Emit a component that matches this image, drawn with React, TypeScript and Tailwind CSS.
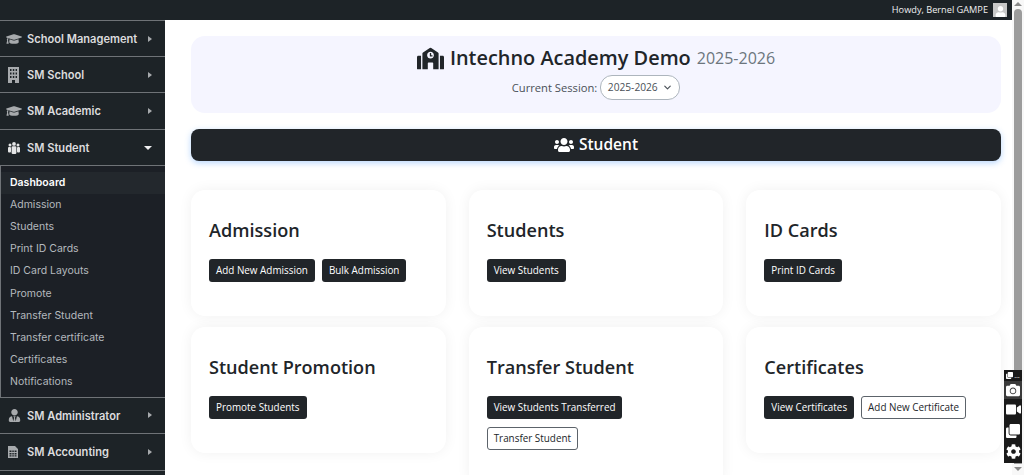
import React from 'react';
import { FaGraduationCap, FaSchool, FaUsers, FaUserTie, FaCamera, FaVideo, FaCog, FaUser, FaClone } from 'react-icons/fa';
import { ChevronDown } from 'lucide-react';

const subItems = [
  'Admission',
  'Students',
  'Print ID Cards',
  'ID Card Layouts',
  'Promote',
  'Transfer Student',
  'Transfer certificate',
  'Certificates',
  'Notifications',
];

// tall building with window grid
const BuildingIcon = () => (
  <svg width="11" height="16" viewBox="0 0 11 16" className="ml-[2px]">
    <path
      fill="currentColor"
      fillRule="evenodd"
      d="M0 0h11v16H7v-3H4v3H0zM2 2v2h1.5V2zm2.8 0v2h1.5V2zm2.8 0v2H9V2zM2 5.5v2h1.5v-2zm2.8 0v2h1.5v-2zm2.8 0v2H9v-2zM2 9v2h1.5V9zm2.8 0v2h1.5V9zm2.8 0v2H9V9z"
    />
  </svg>
);

// sheet with table grid
const SheetIcon = () => (
  <svg width="10" height="12" viewBox="0 0 10 12" className="ml-[2px]">
    <path
      fill="currentColor"
      fillRule="evenodd"
      d="M0 0h7l3 3v9H0zM1.5 4.500v1.500h2V4.500zm2.800 0v1.500h1.500V4.500zm2.300 0v1.500h1.900V4.500zM1.500 7v1.500h2V7zm2.800 0v1.500h1.500V7zm2.300 0v1.500h1.900V7zM1.500 9.300v1.300h2V9.300zm2.800 0v1.300h1.500V9.300zm2.300 0v1.300h1.900V9.300z"
    />
  </svg>
);

// three standing figures
const GroupIcon = () => (
  <svg width="12" height="12" viewBox="0 0 12 12" className="ml-[2px]">
    <g fill="currentColor">
      <circle cx="2" cy="3" r="1.5" />
      <circle cx="6" cy="1.900" r="1.900" />
      <circle cx="10" cy="3" r="1.5" />
      <rect x="0" y="5" width="3" height="5.500" rx="1" />
      <rect x="3.600" y="4.300" width="4.800" height="7.700" rx="1.200" />
      <rect x="9" y="5" width="3" height="5.500" rx="1" />
    </g>
  </svg>
);

const MenuItem: React.FC<{
  icon: React.ReactNode;
  label: string;
  open?: boolean;
  className?: string;
}> = ({ icon, label, open = false, className = 'h-[36px]' }) => (
  <div className={`flex items-center border-b border-[#6f7377] bg-[#1d2327] pl-[6px] pr-[13px] ${className}`}>
    <span className={`flex w-[21px] shrink-0 justify-start ${open ? 'text-[#e4e5e6]' : 'text-[#a7aaad]'}`}>{icon}</span>
    <span className="grow pt-[1px] text-[11.1px] font-semibold text-[#dcdcde]">{label}</span>
    {open ? (
      <span className="h-0 w-0 border-x-[4px] border-t-[4px] border-x-transparent border-t-[#f0f0f1]" />
    ) : (
      <span className="h-0 w-0 border-y-[3.5px] border-l-[4px] border-y-transparent border-l-[#a7aaad]" />
    )}
  </div>
);

const DarkButton: React.FC<{ label: string }> = ({ label }) => (
  <button className="h-[23px] rounded-[3px] bg-[#212529] px-[7px] text-[9.9px] whitespace-nowrap text-white">
    {label}
  </button>
);

const OutlineButton: React.FC<{ label: string }> = ({ label }) => (
  <button className="h-[23px] rounded-[3px] border border-[#5c636a] bg-white px-[6px] text-[9.9px] whitespace-nowrap text-[#212529]">
    {label}
  </button>
);

const Card: React.FC<{ title: string; children: React.ReactNode; className?: string }> = ({
  title,
  children,
  className = 'h-[126px]',
}) => (
  <div className={`rounded-[14px] bg-white px-[18px] pt-[25px] shadow-[0_0_14px_rgba(0,0,0,0.06)] ${className}`}>
    <h3 className="text-[18.1px] leading-[30px] font-[550] text-[#212529]">{title}</h3>
    <div className="mt-[14px] flex flex-wrap gap-x-[7px] gap-y-[8px]">{children}</div>
  </div>
);

export default function App() {
  return (
    <div className="relative flex h-[475px] w-[1024px] overflow-hidden bg-white font-['Open_Sans',sans-serif]">
      <div className="flex min-w-0 grow flex-col">
        {/* admin bar */}
        <div className="flex h-[20px] shrink-0 items-center justify-end bg-[#1d2327] pr-[5px] text-[9.2px] text-[#f0f0f1]">
          <span>Howdy, Bernel GAMPE</span>
          <span className="ml-[5px] flex h-[14px] w-[14px] items-end justify-center overflow-hidden bg-[#c8c8c8] text-white">
            <FaUser size={11} />
          </span>
        </div>

        <div className="flex min-h-0 grow">
          {/* sidebar */}
          <aside className="w-[165px] shrink-0 bg-[#1d2327] font-['Inter',sans-serif]">
            <MenuItem icon={<FaGraduationCap size={16} />} label="School Management" className="h-[37px] border-t" />
            <MenuItem icon={<BuildingIcon />} label="SM School" />
            <MenuItem icon={<FaGraduationCap size={16} />} label="SM Academic" className="h-[37px]" />
            <MenuItem icon={<GroupIcon />} label="SM Student" open />
            <div className="border-b border-l border-[#6f7377] bg-[#1c2026] pt-[6px] pb-[4px] text-[10.5px]">
              <div className="flex h-[22px] items-center bg-[#23282d] pl-[9px] font-semibold text-white">Dashboard</div>
              {subItems.map((item) => (
                <div key={item} className="flex h-[22.1px] items-center pl-[9px] text-[#b4b9be]">
                  {item}
                </div>
              ))}
            </div>
            <MenuItem icon={<FaUserTie size={13} className="ml-[2px]" />} label="SM Administrator" />
            <MenuItem icon={<SheetIcon />} label="SM Accounting" className="h-[37px]" />
          </aside>

          {/* main content */}
          <main className="min-w-0 grow pt-[16px] pr-[11px] pl-[26px]">
            <div className="flex h-[77px] flex-col items-center rounded-[14px] bg-[#f5f5ff] pt-[6px]">
              <div className="flex items-center text-[#212529]">
                <FaSchool size={27} className="mr-[6px]" />
                <span className="text-[19.9px] leading-[32px] font-[550]">Intechno Academy Demo</span>
                <span className="ml-[6px] text-[16px] leading-[32px] text-[#6c757d]">2025-2026</span>
              </div>
              <div className="mt-[1px] flex items-center text-[11.2px] text-[#495057]">
                <span className="pt-[1px]">Current Session:</span>
                <span className="ml-[3px] flex h-[25px] w-[80px] items-center justify-center gap-[4px] rounded-[12px] border border-[#adb5bd] bg-white text-[10.2px] text-[#495057]">
                  2025-2026
                  <ChevronDown size={11} strokeWidth={2.5} />
                </span>
              </div>
            </div>

            <div className="mt-[16px] flex h-[32px] items-center justify-center rounded-[8px] bg-[#212529] text-white shadow-[0_2px_6px_rgba(96,165,250,0.45)]">
              <FaUsers size={20} className="mr-[5px]" />
              <span className="text-[15.5px] font-semibold">Student</span>
            </div>

            <div className="mt-[29px] grid grid-cols-3 items-start gap-x-[23px] gap-y-[11px]">
              <Card title="Admission">
                <DarkButton label="Add New Admission" />
                <DarkButton label="Bulk Admission" />
              </Card>
              <Card title="Students">
                <DarkButton label="View Students" />
              </Card>
              <Card title="ID Cards">
                <DarkButton label="Print ID Cards" />
              </Card>
              <Card title="Student Promotion">
                <DarkButton label="Promote Students" />
              </Card>
              <Card title="Transfer Student" className="h-[160px]">
                <DarkButton label="View Students Transferred" />
                <OutlineButton label="Transfer Student" />
              </Card>
              <Card title="Certificates">
                <DarkButton label="View Certificates" />
                <OutlineButton label="Add New Certificate" />
              </Card>
            </div>
          </main>
        </div>
      </div>

      {/* scrollbar */}
      <div className="flex w-[12px] shrink-0 flex-col items-center justify-between bg-[#f8f8f8] pt-[2px] pb-[4px]">
        <span className="h-0 w-0 border-x-[4px] border-b-[4px] border-x-transparent border-b-[#8a8a8a]" />
        <div className="mt-[3px] w-[8px] grow rounded-t-[4px] bg-[#9c9c9c]" />
        <span className="mt-[3px] h-0 w-0 border-x-[4px] border-t-[4px] border-x-transparent border-t-[#8a8a8a]" />
      </div>

      {/* capture toolbar floating over the page */}
      <div className="absolute top-[370px] left-[1004px] flex h-[93px] w-[18px] flex-col items-center bg-[#1a1a1a] text-white">
        <div className="flex h-[11px] items-center gap-[1px]">
          <FaClone size={7} />
          <span className="text-[7px] leading-none">…</span>
        </div>
        <div className="flex h-[18px] w-full items-center justify-center bg-[#3a3a3a]">
          <FaCamera size={14} />
        </div>
        <div className="flex h-[21px] items-center">
          <FaVideo size={15} />
        </div>
        <div className="flex h-[21px] items-center">
          <FaClone size={14} />
        </div>
        <div className="flex h-[21px] items-center">
          <FaCog size={15} />
        </div>
      </div>
    </div>
  );
}
